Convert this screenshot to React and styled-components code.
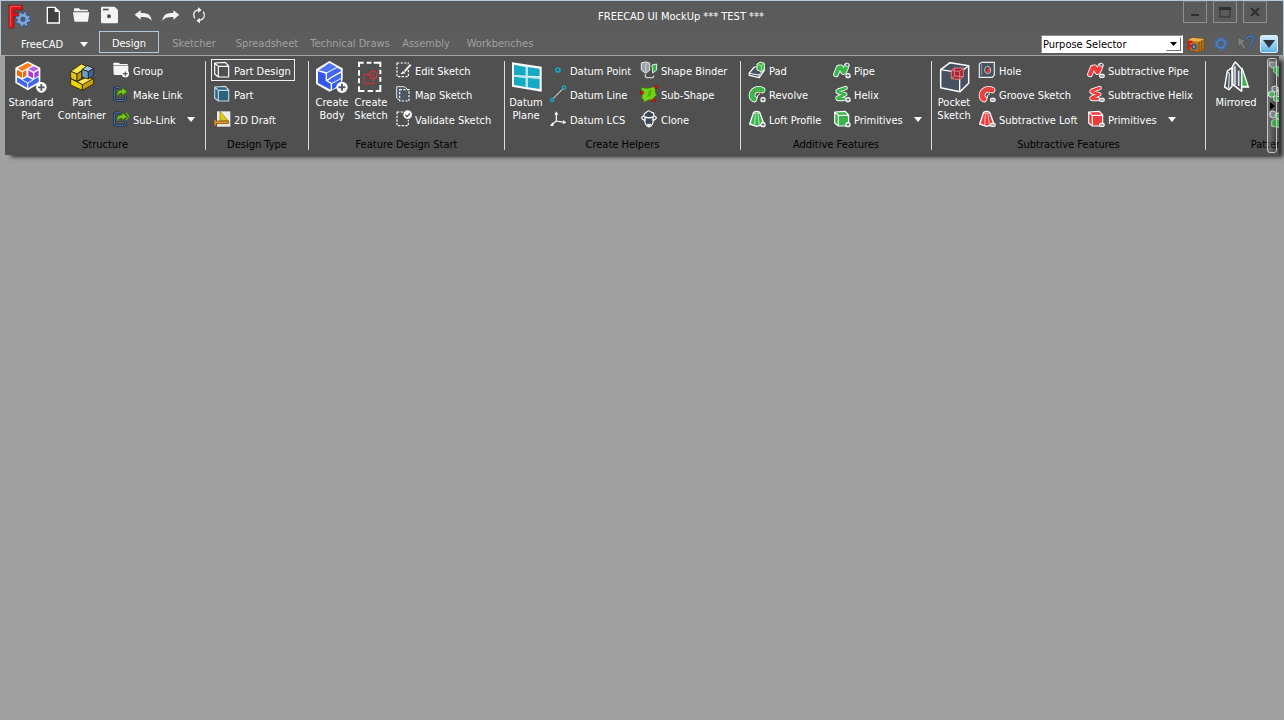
import React from 'react';
import styled, { createGlobalStyle } from 'styled-components';

const FONT = '"DejaVu Sans Condensed", "DejaVu Sans", "Noto Sans", sans-serif';
const GREEN = '#39b54a';
const RED = '#f23c3c';
const PANEL = '#505050';

const GlobalStyle = createGlobalStyle`
  * { box-sizing: border-box; }
  body {
    margin: 0;
    background: #a0a0a0;
    color: #fff;
    font: 11px/13px ${FONT};
  }
  #root { padding-bottom: 16px; }
  button, select { font: inherit; color: inherit; }
  button {
    margin: 0;
    padding: 0;
    border: 0;
    background: none;
    cursor: pointer;
    white-space: nowrap;
  }
  svg { display: block; flex: none; overflow: visible; }
`;

/* ---------- layout ---------- */

const TitleArea = styled.header`
  background: linear-gradient(#5a5a5a, #5e5e5e);
  border: 1px solid #b4c8dc;
  border-bottom-color: #a6a6a6;
`;

const TitleBar = styled.div`
  display: flex;
  align-items: flex-start;
  height: 30px;
`;

const Logo = styled.div`
  padding: 4px 7px 0 7px;
`;

const QuickAccess = styled.div`
  display: flex;
  padding-top: 5px;
`;

const QuickButton = styled.button`
  display: grid;
  justify-items: center;
  width: 28px;
  height: 18px;
  margin-left: ${(p) => (p.$apart ? '6px' : '0')};
`;

const Title = styled.h1`
  flex: 1;
  margin: 0;
  font-size: 11px;
  font-weight: normal;
  line-height: 32px;
  text-align: center;
`;

const WindowControls = styled.div`
  display: flex;
  gap: 6px;
  padding: 0 16px 0 34px;
`;

const WindowButton = styled.button`
  display: grid;
  place-items: center;
  width: 24px;
  height: 22px;
  border: 1px solid #909090;
  border-top-color: #707070;
`;

const MenuBar = styled.div`
  display: flex;
  align-items: flex-start;
  height: 24px;
`;

const AppMenu = styled.button`
  display: flex;
  align-items: center;
  justify-content: space-between;
  width: 98px;
  height: 24px;
  padding: 2px 11px 0 20px;
`;

const Tabs = styled.nav`
  display: flex;
  flex: 1;
`;

const Tab = styled.button`
  width: ${(p) => p.$width}px;
  height: 22px;
  padding-top: 2px;
  margin-right: ${(p) => (p.$active ? '4px' : '0')};
  border: 1px solid ${(p) => (p.$active ? '#b4c8dc' : 'transparent')};
  color: ${(p) => (p.$active ? '#fff' : '#a0a0a0')};
`;

const MenuTools = styled.div`
  display: flex;
  align-items: center;
  height: 18px;
  margin: 4px 5px 0 0;
`;

const SelectBox = styled.label`
  position: relative;
  width: 142px;
`;

const Select = styled.select`
  display: block;
  width: 100%;
  height: 18px;
  padding: 0 18px 0 1px;
  border: 1px solid #fff;
  border-top-color: #8c8c8c;
  border-left-color: #8c8c8c;
  border-radius: 0;
  outline: 0;
  appearance: none;
  background: #fff;
  color: #000;
`;

const SelectArrow = styled.span`
  position: absolute;
  top: 2px;
  right: 2px;
  display: grid;
  place-items: center;
  width: 15px;
  height: 14px;
  border: 1px solid #fff;
  border-right-color: #707070;
  border-bottom-color: #707070;
  pointer-events: none;
`;

const MenuTool = styled.button`
  display: grid;
  place-items: center;
  width: 25px;
  height: 18px;
`;

const CollapseButton = styled.button`
  display: grid;
  place-items: center;
  width: 18px;
  height: 18px;
  margin-left: 2px;
  border: 1px solid #d6ecfa;
  border-radius: 2px;
  background: linear-gradient(#d6effc, #5fb2e6);
`;

const Ribbon = styled.main`
  position: relative;
  display: flex;
  height: 99px;
  margin: 0 5px;
  overflow: hidden;
  background: ${PANEL};
  box-shadow: 5px 3px 4px -1px rgba(0, 0, 0, 0.7);
`;

const GroupBox = styled.section`
  display: flex;
  flex: none;
  flex-direction: column;
  width: ${(p) => p.$width}px;
  padding-top: 2px;
`;

const GroupBody = styled.div`
  display: flex;
  height: 74px;
  padding-left: ${(p) => p.$inset || 0}px;
`;

const GroupTitle = styled.h2`
  margin: 2px 0 0;
  font-size: 11px;
  font-weight: normal;
  line-height: 21px;
  color: #000;
  text-align: center;
`;

const Separator = styled.div`
  flex: none;
  width: 1px;
  margin: 5px 0 5px;
  background: #dcdcdc;
`;

const BigTool = styled.button`
  display: flex;
  flex: none;
  flex-direction: column;
  align-items: center;
  gap: 3px;
  width: ${(p) => p.$width}px;
  padding-top: 3px;
  white-space: pre;
`;

const Column = styled.div`
  display: grid;
  flex: none;
  grid-template-rows: 24px 24px 26px;
  align-items: center;
  justify-items: start;
  width: ${(p) => (p.$width ? `${p.$width}px` : 'auto')};
  margin-left: ${(p) => p.$gap || 0}px;
`;

const Row = styled.div`
  display: flex;
  align-items: center;
`;

const Tool = styled.button`
  display: flex;
  align-items: center;
  gap: 3px;
  height: 22px;
  padding: 0 3px 0 1px;
  border: 1px solid ${(p) => (p.$active ? '#f0f0f0' : 'transparent')};
`;

const ToolLabel = styled.span`
  padding-top: 2px;
`;

const MoreButton = styled.button`
  padding: 6px 4px;
  margin-left: 3px;
`;

const ScrollHandle = styled.button`
  position: absolute;
  top: 2px;
  right: 2px;
  display: grid;
  place-items: center;
  width: 10px;
  height: 95px;
  border: 1px solid #c8c8c8;
  border-radius: 3px;
  background: linear-gradient(90deg, #ffffff30, #00000020);
`;

/* ---------- icons ---------- */

const SmallIcon = ({ children }) => (
  <svg width="18" height="18" viewBox="0 0 54 54" fill="none" aria-hidden="true">{children}</svg>
);
const BigIcon = ({ children }) => (
  <svg width="32" height="32" viewBox="0 0 96 96" fill="none" aria-hidden="true">{children}</svg>
);

const Badge = ({ x, y, r = 8, minus }) => (
  <g>
    <circle cx={x} cy={y} r={r} fill="#fff" />
    <path
      d={`M${x - r * 0.62} ${y}h${r * 1.24}${minus ? '' : `M${x} ${y - r * 0.62}v${r * 1.24}`}`}
      stroke="#505866"
      strokeWidth={r * 0.34}
    />
  </g>
);
const MinusBadge = () => (
  <g>
    <rect x="36" y="38" width="17" height="13" rx="5" fill="#fff" />
    <path d="M39 45h11" stroke="#505866" strokeWidth="3" />
  </g>
);
const Mark = ({ minus }) => (minus ? <MinusBadge /> : <Badge x={45} y={44} />);

const Caret = ({ fill = '#fff' }) => (
  <svg width="8" height="5" viewBox="0 0 8 5" aria-hidden="true"><path d="M0 0h8L4 5z" fill={fill} /></svg>
);

const LogoIcon = () => (
  <svg width="24" height="24" viewBox="0 0 72 72" aria-hidden="true">
    <path d="M3 1h40v14H18v8h13v12H18v34H3z" fill="#d81818" stroke="#7c0c0c" strokeWidth="2" />
    <path d="M7 5v60M7 4h32" stroke="#ff5a5a" strokeWidth="3" />
    <circle cx="45" cy="43" r="19" fill="none" stroke="#2b5290" strokeWidth="10" strokeDasharray="7.5 7.42" />
    <circle cx="45" cy="43" r="12" fill="none" stroke="#2b5290" strokeWidth="13" />
    <circle cx="45" cy="43" r="18" fill="none" stroke="#7ba6da" strokeWidth="7" strokeDasharray="5.5 8.63" strokeDashoffset="-1" />
    <circle cx="45" cy="43" r="12" fill="none" stroke="#7ba6da" strokeWidth="9" />
  </svg>
);

const NewIcon = () => (
  <SmallIcon>
    <path d="M10 4h23l13 13v34H10z" fill="#404040" stroke="#fff" strokeWidth="4" />
    <path d="M32 4v14h14z" fill="#fff" />
  </SmallIcon>
);
const OpenIcon = () => (
  <SmallIcon>
    <path d="M6 16V9q0-2 2-2h13l4 4h20q3 0 3 3v2z" fill="#f4f4f4" />
    <path d="M3 19h49l-4 27q0 1-2 1H9q-2 0-2-2z" fill="#f4f4f4" />
  </SmallIcon>
);
const SaveIcon = () => (
  <SmallIcon>
    <path d="M6 2h38l10 10v37q0 3-3 3H6q-3 0-3-3V5q0-3 3-3z" fill="#f4f4f4" />
    <rect x="9" y="8" width="17" height="5" fill="#505050" />
    <circle cx="27" cy="31" r="6" fill="#505050" />
  </SmallIcon>
);
const UndoIcon = ({ flip }) => (
  <SmallIcon>
    <g transform={flip ? 'translate(54 0) scale(-1 1)' : undefined}>
      <path d="M2 26 20 13v8c20 0 31 5 33 23-7-9-17-12-33-11v8z" fill="#f4f4f4" />
    </g>
  </SmallIcon>
);
const RefreshIcon = () => (
  <SmallIcon>
    <path d="M14 37c-7-12-2-24 12-26M40 17c7 12 2 24-12 26" stroke="#f4f4f4" strokeWidth="4" />
    <path d="M24 3v17l11-8zM30 35v17l-11-8z" fill="#f4f4f4" />
  </SmallIcon>
);

const BoxIcon = () => (
  <SmallIcon>
    <path d="M2 16 16 8l36 4v32l-18 8-32-7z" fill="#b8751b" stroke="#6a400c" strokeWidth="2" />
    <path d="M2 16 16 8l36 4-16 8z" fill="#efb04a" />
    <path d="M36 20v31M44 16v31" stroke="#7c4c10" strokeWidth="3" />
    <path d="M3 17h13v7H9v6h6v6H9v8H3z" fill="#d81818" />
    <circle cx="21" cy="35" r="6" fill="#d89a3c" stroke="#29559c" strokeWidth="5" />
  </SmallIcon>
);
const GearIcon = () => (
  <SmallIcon>
    <circle cx="27" cy="26" r="16" stroke="#3c70b8" strokeWidth="8" strokeDasharray="6.3 6.27" />
    <circle cx="27" cy="26" r="11.5" stroke="#4b7fc4" strokeWidth="7" />
    <circle cx="27" cy="26" r="8" stroke="#2e5ca0" strokeWidth="2" />
  </SmallIcon>
);
const WhatsThisIcon = () => (
  <SmallIcon>
    <path d="M1 5l27 14-10 5 9 14-8 6-7-15-9 7z" fill="#777d78" stroke="#424542" strokeWidth="2" />
    <path d="M30 12c2-11 20-11 20 0 0 9-10 9-10 18M40 35v6" stroke="#24487c" strokeWidth="7" />
    <path d="M30 12c2-11 20-11 20 0 0 9-10 9-10 18M40 35v6" stroke="#4a7cbc" strokeWidth="4" />
  </SmallIcon>
);

const StandardPartIcon = () => (
  <BigIcon>
    <path d="M38 1 76 20v46L38 88 1 66V20z" fill="#fff" />
    <path d="M38 6 52 13 22 30 8 22z" fill="#ff7a1a" />
    <path d="M6 26l15 8v17L6 43zM24 33l10-6v17l-10 7z" fill="#f26a0a" />
    <path d="M40 24 56 16l15 7-15 9z" fill="#b75fdc" />
    <path d="M40 28l14 8v16l-14-8zM58 36l13-8v16l-13 8z" fill="#a63ccf" />
    <path d="M6 49l15 8 16-9 17 9 17-9v15L38 82 6 63z" fill="#3f66f0" />
    <path d="M22 57 38 66l16-9M38 66v16" stroke="#fff" strokeWidth="3" />
    <Badge x={79} y={79} r={16} />
  </BigIcon>
);
const PartContainerIcon = () => (
  <BigIcon>
    <g stroke="#2c2600" strokeWidth="2.5" strokeLinejoin="round">
      <path d="M14 31 46 9l18 8-31 22z" fill="#fce94f" />
      <path d="M14 31l19 8v22l-19-8z" fill="#e6c51a" />
      <path d="M33 39l14-9v22l-14 9z" fill="#c4a000" />
      <path d="M14 53l19 9 30-14 20 6-32 18z" fill="#fce94f" />
      <path d="M14 53l35 18v17L14 72z" fill="#edd400" />
      <path d="M49 71 83 52v17L49 88z" fill="#c4a000" />
      <path d="M48 25 64 14l19 8-16 10z" fill="#9cc0e8" />
      <path d="M48 25l19 7v22l-19-6z" fill="#6d9ed2" />
      <path d="M67 32l16-10v21L67 54z" fill="#3465a4" />
    </g>
  </BigIcon>
);
const GroupIcon = () => (
  <SmallIcon>
    <path d="M4 12V7q0-2 2-2h14l4 4h22q2 0 2 3z" fill="#fff" />
    <path d="M4 14h45v12l-3 16H8q-3 0-3-3z" fill="#f4f4f4" />
    <path d="M5 13h43" stroke="#b0b0b0" strokeWidth="2" />
    <Badge x={40} y={38} r={11} />
  </SmallIcon>
);
const LinkIcon = ({ sub }) => (
  <SmallIcon>
    <path d="M22 8H12q-5 0-5 6v26q0 6 6 6h22q6 0 6-6v-7" stroke="#16283f" strokeWidth="7" />
    <path d="M22 8H12q-5 0-5 6v26q0 6 6 6h22q6 0 6-6v-7" stroke="#4a7cba" strokeWidth="3" />
    <path d="M16 36C12 21 20 14 30 15V7l16 13-16 12v-7c-7-1-11 3-14 11z" fill="#73c81c" stroke="#255a04" strokeWidth="2" />
    {sub && <path d="M43 8l7 11-7 11" stroke="#5cae10" strokeWidth="4" />}
  </SmallIcon>
);
const CubeIcon = ({ fill, line = '#fff', children }) => (
  <SmallIcon>
    <path d="M5 6 37 4l10 11v33H16L5 39z" fill={fill} />
    <path d="M5 6 37 4l10 11v33H16L5 39zM5 6l11 10v32M16 16h31" stroke={line} strokeWidth="3.5" strokeLinejoin="round" />
    {children}
  </SmallIcon>
);
const DraftIcon = () => (
  <SmallIcon>
    <rect x="12" y="4" width="40" height="46" fill="#eceeec" />
    <path d="M21 4v29h25z" fill="#edd400" stroke="#8a7400" strokeWidth="2" />
    <path d="M27 20v8h8z" fill="#eceeec" stroke="#8a7400" />
    <path d="M3 28h6v5h38v8H9v7H3z" fill="#dc9630" stroke="#6e4208" strokeWidth="2" />
  </SmallIcon>
);
const BodyIcon = () => (
  <BigIcon>
    <path d="M40 0 80 22v32l-6 21-34 17L0 69V25z" fill="#fff" />
    <path d="M40 6 62 18 33 34 8 28z" fill="#4f73f6" />
    <path d="M6 31l23 7v21l15 9v18L6 66z" fill="#3258ea" />
    <path d="M33 37 64 20l11 7v4L46 47l-13 9zM46 51l29-16v16L48 66l-12-7z" fill="#4166f0" />
    <path d="M48 69l27-15v15L48 86z" fill="#3258ea" />
    <path d="M33 58 46 49 75 33" stroke="#fff" strokeWidth="2.5" />
    <Badge x={78} y={79} r={17} />
  </BigIcon>
);
const SketchIcon = () => (
  <BigIcon>
    <path
      d="M12 18V5h14M35 5h14M56 5h20v13M76 26v14M76 48v14M76 72v18H62M54 90H38M28 90H12V76M12 67V52M12 44V28"
      stroke="#fff"
      strokeWidth="6"
    />
    <path d="M27 40h29v28H27z" stroke="#e03030" strokeWidth="3" />
    <circle cx="54" cy="42" r="12" stroke="#e03030" strokeWidth="3" />
  </BigIcon>
);
const DashedPage = ({ x = 9, y = 6, w = 34, h = 41 }) => (
  <rect x={x} y={y} width={w} height={h} stroke="#fff" strokeWidth="3.5" strokeDasharray="7 4" />
);
const EditSketchIcon = () => (
  <SmallIcon>
    <DashedPage />
    <path d="M48 11 29 32" stroke={PANEL} strokeWidth="11" />
    <path d="M50 11 32 31" stroke="#fff" strokeWidth="6" />
    <path d="M27 30l8 7-16 3z" fill="#fff" />
  </SmallIcon>
);
const MapSketchIcon = () => (
  <SmallIcon>
    <path d="M8 5h23l9 9v34l-24-2L8 38z" fill="#4c5866" />
    <path d="M16 46 8 39V5h24l7 7" stroke="#dfe4e8" strokeWidth="3" />
    <DashedPage x={17} y={14} w={28} h={34} />
  </SmallIcon>
);
const ValidateSketchIcon = () => (
  <SmallIcon>
    <DashedPage />
    <circle cx="41" cy="14" r="16" fill={PANEL} />
    <circle cx="41" cy="14" r="13" fill="#fff" />
    <path d="M34 14l5 6 9-10" stroke="#505050" strokeWidth="4" />
  </SmallIcon>
);
const DatumPlaneIcon = () => (
  <BigIcon>
    <path d="M6 4l89 13v75L6 77z" fill="#fff" />
    <path d="M12 11l35 7v26l-35-2zM53 18l36 5v23l-36-2zM12 47l35 4v27l-35-6zM53 51l36 2v31l-36-5z" fill="#16a9c4" />
    <path d="M13 45l76 6M50 14v68" stroke="#b9e4ec" strokeWidth="4" />
  </BigIcon>
);
const DatumPointIcon = () => (
  <SmallIcon><circle cx="27" cy="27" r="6" stroke="#16a9c4" strokeWidth="5" /></SmallIcon>
);
const DatumLineIcon = () => (
  <SmallIcon>
    <path d="M11 42 42 11" stroke="#fff" strokeWidth="3" />
    <circle cx="9" cy="45" r="5" stroke="#16a9c4" strokeWidth="4" />
    <circle cx="45" cy="8" r="5" stroke="#16a9c4" strokeWidth="4" />
  </SmallIcon>
);
const DatumLcsIcon = () => (
  <SmallIcon>
    <path d="M22 8v25l25 4M22 33 7 45" stroke="#fff" strokeWidth="3.5" />
    <path d="M16 14 22 4l6 10zM43 30l9 8-11 4zM11 37l3 10-11 1z" fill="#fff" />
  </SmallIcon>
);
const ShapeBinderIcon = () => (
  <SmallIcon>
    <path d="M4 6 17 3l12 3v22L17 37 4 27z" fill="#98a2ac" stroke="#e8ecee" strokeWidth="3" />
    <path d="M17 8v26" stroke="#cbd1d6" strokeWidth="3" />
    <path d="M36 12l14-3v18L38 36z" fill={GREEN} stroke="#d9f0dc" strokeWidth="3" />
    <path d="M16 40v5q0 5 6 5h14q5 0 5-6" stroke="#c8ccd0" strokeWidth="4" />
  </SmallIcon>
);
const SubShapeIcon = () => (
  <SmallIcon>
    <path d="M3 7q18 5 28 1l17-5q-5 18 2 28-11 5-7 15l-16-2-15 8q0-10-7-13 4-12-2-32z" fill="#73d216" stroke="#347004" strokeWidth="2" />
    <path d="M27 16l9-2-4 18-10 3z" fill="#4e9a06" opacity=".6" />
    <g fill="#e81818" stroke="#6a0000" strokeWidth="1.5">
      <circle cx="48" cy="6" r="5" /><circle cx="6" cy="23" r="5" /><circle cx="41" cy="46" r="5" />
    </g>
  </SmallIcon>
);
const CloneIcon = () => (
  <SmallIcon>
    <path d="M12 17c-1-8 4-8 7-10 5-6 12-5 16 0 6 0 8 5 6 10l8 5c-1 6-5 8-9 8-1 12-5 20-13 21-8-1-12-9-13-21-4 0-8-3-9-8z" fill="#3c4856" stroke="#fff" strokeWidth="3.5" />
    <path d="M12 20c9 4 21 4 30 0" stroke="#fff" strokeWidth="4" />
    <path d="M15 22v10M39 22v10" stroke="#fff" strokeWidth="4" />
    <path d="M21 43h12l-6 7z" stroke="#fff" strokeWidth="3" fill="#fff" />
  </SmallIcon>
);
const PadIcon = () => (
  <SmallIcon>
    <path d="M3 37 19 18h30v10L34 50l-30-7z" fill="#46525f" stroke="#fff" strokeWidth="3.5" strokeLinejoin="round" />
    <path d="M3 37l30 5 16-18M33 42v8" stroke="#fff" strokeWidth="3" />
    <path d="M27 9l10-6 12 4v18l-9 7-13-5z" fill={GREEN} stroke="#e3f6e5" strokeWidth="3" />
    <path d="M28 11l12 3v15M40 14l8-6" stroke="#b4e4ba" strokeWidth="2.5" />
  </SmallIcon>
);
const Tube = ({ d, color, width = 9 }) => (
  <g strokeLinecap="round" strokeLinejoin="round">
    <path d={d} stroke="#fff" strokeWidth={width + 5} />
    <path d={d} stroke={color} strokeWidth={width} />
  </g>
);
const RevolveIcon = ({ color, minus }) => (
  <SmallIcon>
    <Tube d="M42 15C27 9 14 17 12 30q0 9 6 12" color={color} width={15} />
    <path d="M17 20c4 0 8-4 9-9M30 24l8-2" stroke={minus ? GREEN : RED} strokeWidth="3" strokeDasharray="4 3" />
    <path d="M27 40q-1-10 9-14" stroke="#fff" strokeWidth="3" />
    <Mark minus={minus} />
  </SmallIcon>
);
const LoftIcon = ({ color, minus }) => (
  <SmallIcon>
    <path d="M17 7q9-5 18 0l13 36-22 6-21-7z" fill={color} stroke="#fff" strokeWidth="4" strokeLinejoin="round" />
    <path d="M17 8q9 6 18 0" fill="#5a6470" stroke="#fff" strokeWidth="2.5" />
    <path d="M22 14 20 45M30 14l4 30" stroke="#ffffffb0" strokeWidth="3" />
    <Mark minus={minus} />
  </SmallIcon>
);
const PipeIcon = ({ color, minus }) => (
  <SmallIcon>
    <Tube d="M9 40 17 20 23 19 31 33 34 32 41 14" color={color} width={12} />
    <circle cx="43" cy="12" r="5" fill="#505866" stroke="#fff" strokeWidth="2.5" />
    <Mark minus={minus} />
  </SmallIcon>
);
const HelixIcon = ({ color, minus }) => (
  <SmallIcon>
    <Tube d="M38 9 15 17q-4 3 2 5l20 6-23 10q-3 4 4 4l14 0" color={color} width={8} />
    <Mark minus={minus} />
  </SmallIcon>
);
const PrimitiveIcon = ({ color, minus }) => (
  <CubeIcon fill={color}><Mark minus={minus} /></CubeIcon>
);
const PocketIcon = () => (
  <BigIcon>
    <path d="M8 26 36 5l56 9v53L66 92 8 80z" fill="#46525f" stroke="#fff" strokeWidth="4.5" strokeLinejoin="round" />
    <path d="M8 26l57 9 27-21M65 35v56" stroke="#fff" strokeWidth="4" />
    <path d="M40 29l9-8h27v26l-10 9-26-3z" fill="#a02834" />
    <path d="M40 29l9-8h27v26l-10 9-26-3zM40 29l25 2 11-10M65 31v25M49 21v24l27 2M49 45l-9 8" stroke="#ef8a92" strokeWidth="2.5" />
  </BigIcon>
);
const HoleIcon = () => (
  <SmallIcon>
    <path d="M4 9 11 4h38v38l-6 7H4z" fill="#46525f" stroke="#e9edf0" strokeWidth="3.5" />
    <path d="M11 9v34" stroke="#a8b2ba" strokeWidth="2" />
    <ellipse cx="29" cy="27" rx="9" ry="11" fill="#39434e" stroke="#dfe4e8" strokeWidth="2.5" />
    <path d="M32 17q9 10-3 20-7-1-6-6 8 1 5-7z" fill={RED} />
  </SmallIcon>
);
const MirroredIcon = () => (
  <BigIcon>
    <path d="M14 78 22 30 36 20v56l-9 10z" fill="#46525f" stroke="#fff" strokeWidth="4.5" strokeLinejoin="round" />
    <path d="M22 32l6 4-2 45" stroke="#fff" strokeWidth="3" />
    <path d="M52 25l16-5 20 60H64z" fill="#fff" />
    <path d="M66 28l16 46H66z" fill={GREEN} />
    <path d="M38 15 46 3l19 21v67L38 70z" fill="#505866" stroke="#fff" strokeWidth="4.5" strokeLinejoin="round" />
    <path d="M45 16v56" stroke="#fff" strokeWidth="4" />
    <path d="M56 29v46" stroke="#dfe3e6" strokeWidth="5" />
  </BigIcon>
);
const LinearPatternIcon = () => (
  <SmallIcon>
    <path d="M4 3h20v15l-7 5L4 15z" fill="#7b868e" stroke="#c4cacc" strokeWidth="3" />
    <path d="M17 18h26v22l-9 7-17-14z" fill={GREEN} stroke="#a8dcae" strokeWidth="3" />
  </SmallIcon>
);
const PolarPatternIcon = () => (
  <SmallIcon>
    <g stroke="#e4eee4" strokeWidth="3">
      <path d="M12 6l9-3 9 4v10l-9 4-9-4z" fill="#7b868e" />
      <path d="M2 22l9-3 9 4v10l-9 4-9-4zM30 18l9-3 9 4v10l-9 4-9-4zM17 35l9-3 9 4v10l-9 4-9-4z" fill={GREEN} />
    </g>
  </SmallIcon>
);
const MultiTransformIcon = () => (
  <SmallIcon>
    <path d="M6 6l9-3 9 4v13l-9 4-9-4z" fill="#7b868e" stroke="#e4eee4" strokeWidth="3" />
    <path d="M22 12l9-3 9 4v10l-9 4-9-4z" fill={GREEN} stroke="#e4eee4" strokeWidth="3" />
    <path d="M11 32l10-5 22 2v18l-8 5-24-3z" fill={GREEN} stroke="#a8dcae" strokeWidth="3" />
  </SmallIcon>
);

/* ---------- ribbon pieces ---------- */

const TABS = [
  ['Design', 60], ['Sketcher', 62], ['Spreadsheet', 84],
  ['Technical Draws', 82], ['Assembly', 70], ['Workbenches', 78],
];

const Group = ({ title, width, inset, last, children }) => (
  <>
    <GroupBox $width={width} aria-label={title}>
      <GroupBody $inset={inset}>{children}</GroupBody>
      <GroupTitle>{title}</GroupTitle>
    </GroupBox>
    {!last && <Separator />}
  </>
);

const Item = ({ icon, label, name, active, more }) => (
  <Row>
    <Tool type="button" $active={active} aria-label={name}>
      {icon}
      {label && <ToolLabel>{label}</ToolLabel>}
    </Tool>
    {more && <MoreButton type="button" aria-label={`More ${label}`}><Caret /></MoreButton>}
  </Row>
);

const Big = ({ icon, label, width }) => (
  <BigTool type="button" $width={width}>{icon}<span>{label}</span></BigTool>
);

export default function App() {
  return (
    <>
      <GlobalStyle />
      <TitleArea>
        <TitleBar>
          <Logo><LogoIcon /></Logo>
          <QuickAccess>
            <QuickButton type="button" aria-label="New"><NewIcon /></QuickButton>
            <QuickButton type="button" aria-label="Open"><OpenIcon /></QuickButton>
            <QuickButton type="button" aria-label="Save"><SaveIcon /></QuickButton>
            <QuickButton type="button" aria-label="Undo" $apart><UndoIcon /></QuickButton>
            <QuickButton type="button" aria-label="Redo"><UndoIcon flip /></QuickButton>
            <QuickButton type="button" aria-label="Refresh"><RefreshIcon /></QuickButton>
          </QuickAccess>
          <Title>FREECAD UI MockUp *** TEST ***</Title>
          <WindowControls>
            <WindowButton type="button" aria-label="Minimize">
              <svg width="12" height="12" viewBox="0 0 12 12"><path d="M2 8h8v2H2z" fill="#303030" /></svg>
            </WindowButton>
            <WindowButton type="button" aria-label="Maximize">
              <svg width="12" height="12" viewBox="0 0 12 12"><path d="M1 3h10v8H1zM1 2h10" fill="none" stroke="#303030" /><path d="M0 1h12v3H0z" fill="#303030" /></svg>
            </WindowButton>
            <WindowButton type="button" aria-label="Close">
              <svg width="12" height="12" viewBox="0 0 12 12"><path d="M2 2l8 8M10 2l-8 8" fill="none" stroke="#303030" strokeWidth="2" /></svg>
            </WindowButton>
          </WindowControls>
        </TitleBar>
        <MenuBar>
          <AppMenu type="button">FreeCAD<Caret /></AppMenu>
          <Tabs>
            {TABS.map(([name, width], i) => (
              <Tab key={name} type="button" $width={width} $active={i === 0}>{name}</Tab>
            ))}
          </Tabs>
          <MenuTools>
            <SelectBox>
              <Select aria-label="Purpose Selector" defaultValue="purpose">
                <option value="purpose">Purpose Selector</option>
              </Select>
              <SelectArrow>
                <svg width="7" height="4" viewBox="0 0 7 4"><path d="M0 0h7L3.500 4z" fill="#000" /></svg>
              </SelectArrow>
            </SelectBox>
            <MenuTool type="button" aria-label="Workbench"><BoxIcon /></MenuTool>
            <MenuTool type="button" aria-label="Preferences"><GearIcon /></MenuTool>
            <MenuTool type="button" aria-label="What's this?"><WhatsThisIcon /></MenuTool>
            <CollapseButton type="button" aria-label="Collapse ribbon">
              <svg width="12" height="8" viewBox="0 0 12 8"><path d="M0 0h12L6 8z" fill="#2c3640" /></svg>
            </CollapseButton>
          </MenuTools>
        </MenuBar>
      </TitleArea>

      <Ribbon>
        <Group title="Structure" width={200}>
          <Big icon={<StandardPartIcon />} label={'Standard\nPart'} width={52} />
          <Big icon={<PartContainerIcon />} label={'Part\nContainer'} width={50} />
          <Column $gap={3}>
            <Item icon={<GroupIcon />} label="Group" />
            <Item icon={<LinkIcon />} label="Make Link" />
            <Item icon={<LinkIcon sub />} label="Sub-Link" more />
          </Column>
        </Group>
        <Group title="Design Type" width={102} inset={5}>
          <Column>
            <Item icon={<CubeIcon fill={PANEL} />} label="Part Design" active />
            <Item icon={<CubeIcon fill="#2c6480" line="#c2d4de" />} label="Part" />
            <Item icon={<DraftIcon />} label="2D Draft" />
          </Column>
        </Group>
        <Group title="Feature Design Start" width={195} inset={3}>
          <Big icon={<BodyIcon />} label={'Create\nBody'} width={40} />
          <Big icon={<SketchIcon />} label={'Create\nSketch'} width={38} />
          <Column $gap={2}>
            <Item icon={<EditSketchIcon />} label="Edit Sketch" />
            <Item icon={<MapSketchIcon />} label="Map Sketch" />
            <Item icon={<ValidateSketchIcon />} label="Validate Sketch" />
          </Column>
        </Group>
        <Group title="Create Helpers" width={235}>
          <Big icon={<DatumPlaneIcon />} label={'Datum\nPlane'} width={42} />
          <Column $width={91}>
            <Item icon={<DatumPointIcon />} label="Datum Point" />
            <Item icon={<DatumLineIcon />} label="Datum Line" />
            <Item icon={<DatumLcsIcon />} label="Datum LCS" />
          </Column>
          <Column>
            <Item icon={<ShapeBinderIcon />} label="Shape Binder" />
            <Item icon={<SubShapeIcon />} label="Sub-Shape" />
            <Item icon={<CloneIcon />} label="Clone" />
          </Column>
        </Group>
        <Group title="Additive Features" width={190} inset={5}>
          <Column $width={85}>
            <Item icon={<PadIcon />} label="Pad" />
            <Item icon={<RevolveIcon color={GREEN} />} label="Revolve" />
            <Item icon={<LoftIcon color={GREEN} />} label="Loft Profile" />
          </Column>
          <Column>
            <Item icon={<PipeIcon color={GREEN} />} label="Pipe" />
            <Item icon={<HelixIcon color={GREEN} />} label="Helix" />
            <Item icon={<PrimitiveIcon color={GREEN} />} label="Primitives" more />
          </Column>
        </Group>
        <Group title="Subtractive Features" width={273}>
          <Big icon={<PocketIcon />} label={'Pocket\nSketch'} width={44} />
          <Column $width={109}>
            <Item icon={<HoleIcon />} label="Hole" />
            <Item icon={<RevolveIcon color={RED} minus />} label="Groove Sketch" />
            <Item icon={<LoftIcon color={RED} minus />} label="Subtractive Loft" />
          </Column>
          <Column>
            <Item icon={<PipeIcon color={RED} minus />} label="Subtractive Pipe" />
            <Item icon={<HelixIcon color={RED} minus />} label="Subtractive Helix" />
            <Item icon={<PrimitiveIcon color={RED} minus />} label="Primitives" more />
          </Column>
        </Group>
        <Group title="Patterns" width={130} last>
          <Big icon={<MirroredIcon />} label="Mirrored" width={60} />
          <Column>
            <Item icon={<LinearPatternIcon />} name="Linear Pattern" />
            <Item icon={<PolarPatternIcon />} name="Polar Pattern" />
            <Item icon={<MultiTransformIcon />} name="Multi Transform" />
          </Column>
        </Group>
        <ScrollHandle type="button" aria-label="Scroll ribbon">
          <svg width="5" height="8" viewBox="0 0 5 8"><path d="M0 0l5 4-5 4z" fill="#000" /></svg>
        </ScrollHandle>
      </Ribbon>
    </>
  );
}
